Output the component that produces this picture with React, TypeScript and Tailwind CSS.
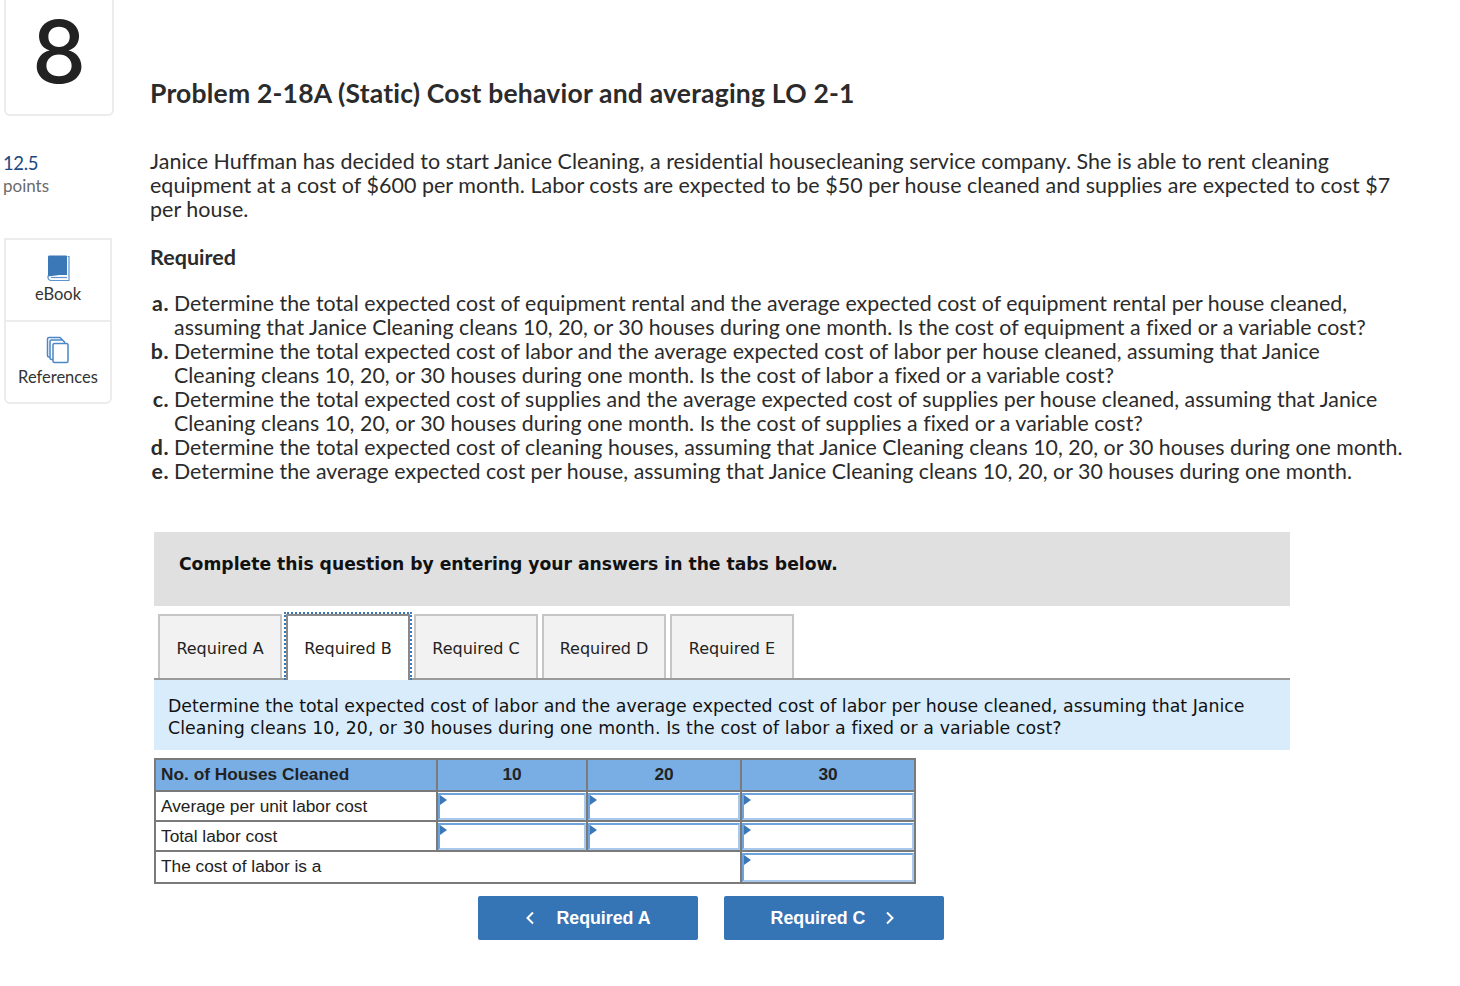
const body = "font-['Lato','Liberation_Sans',sans-serif]";

function Flag() {
  return <span className="absolute left-0 top-0 h-0 w-0 border-y-[5px] border-l-[7px] border-y-transparent border-l-[#3b78b8]" />;
}

function Input({ h = "h-[27px]" }: { h?: string }) {
  return (
    <div className={`relative ${h} border-2 border-[#a9c9ec] border-t-[#6fa3dc] border-l-[#6fa3dc] bg-white`}>
      <Flag />
    </div>
  );
}

function Tab({ label, active }: { label: string; active?: boolean }) {
  if (active) {
    return (
      <div className="-mx-[2px] -mb-[2px] h-[68px] w-[128px] border-2 border-b-0 border-dotted border-[#3b78b8] bg-white">
        <div className="flex h-full items-center justify-center border-x-2 border-t-2 border-[#8a8a8a] pt-[2px]">{label}</div>
      </div>
    );
  }
  return (
    <div className="flex h-[64px] w-[124px] items-center justify-center border-2 border-b-0 border-[#c6c6c6] bg-[#f2f2f2] pt-[3px]">
      {label}
    </div>
  );
}

const items: [string, string[]][] = [
  ["a.", ["Determine the total expected cost of equipment rental and the average expected cost of equipment rental per house cleaned,", "assuming that Janice Cleaning cleans 10, 20, or 30 houses during one month. Is the cost of equipment a fixed or a variable cost?"]],
  ["b.", ["Determine the total expected cost of labor and the average expected cost of labor per house cleaned, assuming that Janice", "Cleaning cleans 10, 20, or 30 houses during one month. Is the cost of labor a fixed or a variable cost?"]],
  ["c.", ["Determine the total expected cost of supplies and the average expected cost of supplies per house cleaned, assuming that Janice", "Cleaning cleans 10, 20, or 30 houses during one month. Is the cost of supplies a fixed or a variable cost?"]],
  ["d.", ["Determine the total expected cost of cleaning houses, assuming that Janice Cleaning cleans 10, 20, or 30 houses during one month."]],
  ["e.", ["Determine the average expected cost per house, assuming that Janice Cleaning cleans 10, 20, or 30 houses during one month."]],
];

export default function App() {
  return (
    <div className={`flex h-[986px] w-[1460px] overflow-hidden bg-white text-[#2b2b2b] ${body}`}>
      <aside className="w-[150px] shrink-0">
        <div className="ml-[4px] flex h-[116px] w-[110px] items-start justify-center rounded-b-[6px] border-2 border-t-0 border-[#ececec] text-[#222]">
          <span className="mt-[7px] font-['Inter',sans-serif] text-[86px] font-medium leading-[90px]">8</span>
        </div>
        <div className="ml-[3px] mt-[35px] text-[18.500px] leading-[24px] tracking-[-0.4px] text-[#1d4a80]">12.5</div>
        <div className="ml-[3px] text-[17px] leading-[22px] text-[#6b6b6b]">points</div>
        <div className="ml-[4px] mt-[41px] w-[108px] rounded-b-[6px] border-2 border-[#ececec] text-[16.500px] text-[#333]">
          <div className="flex h-[82px] flex-col items-center border-b-2 border-[#ececec] pt-[14px]">
            <svg width="26" height="28" viewBox="0 0 26 28">
              <path d="M4 1.500h17a1 1 0 0 1 1 1V21H6a3 3 0 0 0-3 2V3a1.500 1.500 0 0 1 1-1.500z" fill="#3b78b8" />
              <path d="M3 22.500a3 3 0 0 1 3-2.500h2v-1H22v1" fill="#3b78b8" />
              <path d="M22.500 2.500h1.500V26.500H6a3 3 0 0 1-3-3v-2" fill="none" stroke="#5b94d0" strokeWidth="1.200" />
              <path d="M6 23.500H22" stroke="#5b94d0" strokeWidth="1.200" />
            </svg>
            <span className="mt-[2px] leading-[20px]">eBook</span>
          </div>
          <div className="flex h-[80px] flex-col items-center pt-[14px]">
            <svg width="26" height="28" viewBox="0 0 26 28" fill="white" stroke="#4a88c8" strokeWidth="1.500">
              <path d="M4 1.500h11l2 2V21H4a1.500 1.500 0 0 1-1.500-1.500V3A1.500 1.500 0 0 1 4 1.500z" />
              <path d="M6.500 4h11l2 2V23.500H6.500a1.500 1.500 0 0 1-1.500-1.500V5.500A1.500 1.500 0 0 1 6.500 4z" />
              <rect x="8" y="7.500" width="15" height="19" rx="1.500" />
            </svg>
            <span className="mt-[3px] leading-[20px]">References</span>
          </div>
        </div>
      </aside>

      <main className="min-w-0 flex-1">
        <h1 className="mt-[77px] text-[26.500px] font-bold leading-[32px] tracking-[0.2px] text-[#2b2b2b]">Problem 2-18A (Static) Cost behavior and averaging LO 2-1</h1>

        <p className="mt-[40px] whitespace-nowrap text-[21.460px] leading-[24px] tracking-[0.04px]">
          Janice Huffman has decided to start Janice Cleaning, a residential housecleaning service company. She is able to rent cleaning<br />
          equipment at a cost of $600 per month. Labor costs are expected to be $50 per house cleaned and supplies are expected to cost $7<br />
          per house.
        </p>

        <h2 className="mt-[24px] text-[21.500px] font-bold leading-[24px] tracking-[0.04px]">Required</h2>

        <ol className="mt-[22px] whitespace-nowrap text-[21.320px] leading-[24px] tracking-[0.04px]">
          {items.map(([k, lines]) => (
            <li key={k} className="flex">
              <b className="w-[24px] shrink-0 pr-[5px] text-right tracking-[0.5px]">{k}</b>
              <span>
                {lines.map((l) => (
                  <span key={l} className="block">{l}</span>
                ))}
              </span>
            </li>
          ))}
        </ol>

        <section className="ml-[4px] mt-[49px] w-[1136px]">
          <div className="h-[74px] bg-[#e0e0e0] pl-[25px] pt-[20px] font-['DejaVu_Sans',sans-serif] text-[17.200px] font-bold leading-[24px] text-[#111]">
            Complete this question by entering your answers in the tabs below.
          </div>
          <div className="flex h-[74px] items-end gap-[4px] border-b-2 border-[#9a9a9a] pl-[4px] font-['DejaVu_Sans',sans-serif] text-[16px] text-[#222]">
            <Tab label="Required A" />
            <Tab label="Required B" active />
            <Tab label="Required C" />
            <Tab label="Required D" />
            <Tab label="Required E" />
          </div>
          <div className="h-[70px] bg-[#d9ecfb] pl-[14px] pt-[15px] font-['DejaVu_Sans',sans-serif] text-[17.350px] leading-[22px] text-[#111]">
            <span className="block">Determine the total expected cost of labor and the average expected cost of labor per house cleaned, assuming that Janice</span>
            <span className="block tracking-[0.09px]">Cleaning cleans 10, 20, or 30 houses during one month. Is the cost of labor a fixed or a variable cost?</span>
          </div>

          <table className="mt-[8px] w-[760px] table-fixed border-collapse border-2 border-[#7a7a7a] font-['Liberation_Sans',sans-serif] text-[17.300px] text-[#222]">
            <colgroup>
              <col className="w-[282px]" />
              <col className="w-[150px]" />
              <col className="w-[154px]" />
              <col className="w-[174px]" />
            </colgroup>
            <tbody>
              <tr className="h-[32px] bg-[#78aee3] font-bold">
                <td className="border-2 border-[#7a7a7a] pl-[5px]">No. of Houses Cleaned</td>
                <td className="border-2 border-[#7a7a7a] text-center">10</td>
                <td className="border-2 border-[#7a7a7a] text-center">20</td>
                <td className="border-2 border-[#7a7a7a] text-center">30</td>
              </tr>
              <tr className="h-[30px]">
                <td className="border-2 border-[#7a7a7a] pl-[5px] pt-[1px]">Average per unit labor cost</td>
                <td className="border-2 border-[#7a7a7a] p-0"><Input /></td>
                <td className="border-2 border-[#7a7a7a] p-0"><Input /></td>
                <td className="border-2 border-[#7a7a7a] p-0"><Input /></td>
              </tr>
              <tr className="h-[30px]">
                <td className="border-2 border-[#7a7a7a] pl-[5px] pt-[1px]">Total labor cost</td>
                <td className="border-2 border-[#7a7a7a] p-0"><Input /></td>
                <td className="border-2 border-[#7a7a7a] p-0"><Input /></td>
                <td className="border-2 border-[#7a7a7a] p-0"><Input /></td>
              </tr>
              <tr className="h-[32px]">
                <td colSpan={3} className="border-2 border-[#7a7a7a] pl-[5px]">The cost of labor is a</td>
                <td className="border-2 border-[#7a7a7a] p-0"><Input h="h-[29px]" /></td>
              </tr>
            </tbody>
          </table>

          <div className="ml-[324px] mt-[12px] flex gap-[26px] font-['Liberation_Sans',sans-serif] text-[17.800px] font-bold text-white">
            <button className="flex h-[44px] w-[220px] items-center justify-center gap-[21px] rounded-[2px] bg-[#3574b5]">
              <svg width="10" height="14" viewBox="0 0 10 14" fill="none" stroke="white" strokeWidth="2"><path d="M8 1.500 2.500 7 8 12.500" /></svg>
              Required A
            </button>
            <button className="flex h-[44px] w-[220px] items-center justify-center gap-[20px] rounded-[2px] bg-[#3574b5] pr-[2px]">
              Required C
              <svg width="10" height="14" viewBox="0 0 10 14" fill="none" stroke="white" strokeWidth="2"><path d="M2 1.500 7.500 7 2 12.500" /></svg>
            </button>
          </div>
        </section>
      </main>
    </div>
  );
}
